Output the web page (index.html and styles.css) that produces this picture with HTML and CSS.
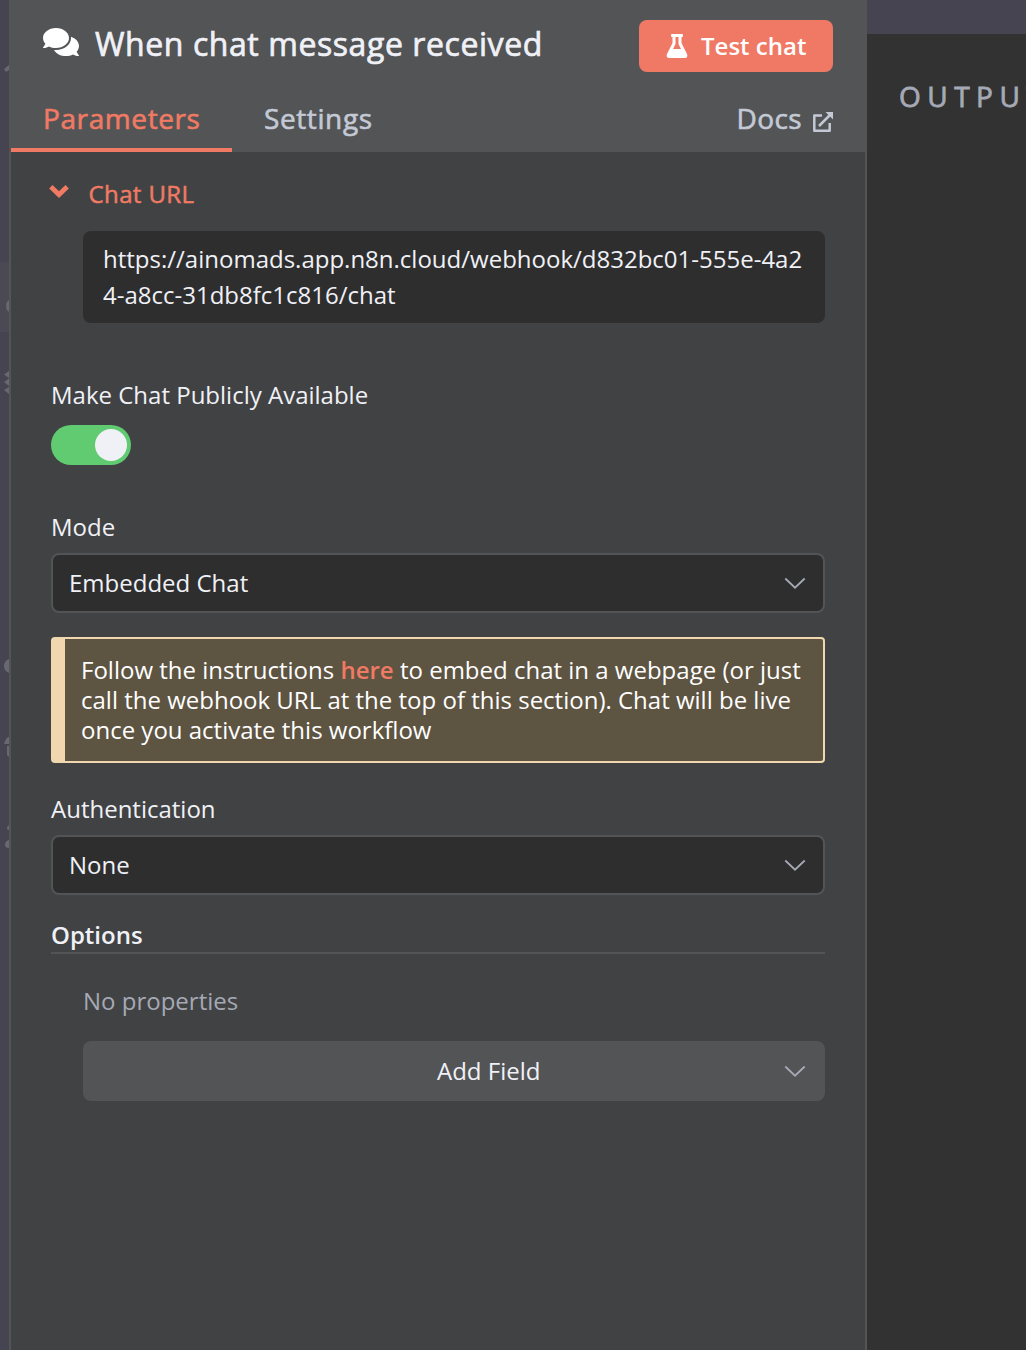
FILE: index.html
```html
<!DOCTYPE html>
<html lang="en">
<head>
<meta charset="utf-8">
<title>When chat message received</title>
<link rel="stylesheet" href="styles.css">
</head>
<body>
<div class="app">
  <nav class="rail">
    <svg width="9" height="1350" viewBox="0 0 9 1350">
      <rect y="262" width="9" height="70" fill="#4a4954"/>
      <g fill="#686873">
        <path d="M4 69L9 65V70L6 72Z"/>
        <path d="M9 300Q6 302 6 306T9 312Z"/>
        <path d="M9 371V378L4 374.500ZM9 378.500V386L4 382ZM9 387V394L4 390Z"/>
        <path d="M9 659Q4 661 4 666T9 673Z"/>
        <path d="M9 737Q6 737 4 744H9ZM7 746H9V757L7 755Z"/>
        <path d="M9 825Q7 826 7 828T9 830ZM9 840Q5 841 5 844.500T9 848Z"/>
      </g>
    </svg>
  </nav>
  <main class="panel">
    <header class="header">
      <div class="title-row">
        <svg class="comments" viewBox="0 32 576 448"><path fill="#fff" d="M416 192c0-88.400-93.100-160-208-160S0 103.600 0 192c0 34.300 14.100 65.900 38 92-13.400 30.200-35.500 54.200-35.800 54.500-2.200 2.300-2.800 5.700-1.500 8.700S4.800 352 8 352c36.600 0 66.900-12.300 88.700-25 32.200 15.700 70.300 25 111.300 25 114.900 0 208-71.600 208-160zm122 220c23.900-26 38-57.700 38-92 0-66.900-53.500-124.200-129.300-148.100.9 6.600 1.300 13.300 1.300 20.100 0 105.900-107.700 192-240 192-10.800 0-21.300-.8-31.700-1.900C207.800 439.600 281.800 480 368 480c41 0 79.100-9.200 111.300-25 21.800 12.700 52.100 25 88.700 25 3.200 0 6.100-1.900 7.300-4.800 1.300-2.900.7-6.300-1.500-8.700-.3-.3-22.400-24.200-35.800-54.500z"/></svg>
        <h1 class="title">When chat message received</h1>
        <button class="test-button">
          <svg class="flask" viewBox="0 0 22 24"><path fill="#fff" fill-rule="evenodd" d="M6 0H16Q17 0 17 1V2Q17 3 16 3H15.500V9L21 20Q22.300 24 19 24H3Q-.3 24 1 20L6.500 9V3H6Q5 3 5 2V1Q5 0 6 0ZM9.500 3V10L7 15H15L12.500 10V3Z"/></svg>
          <span>Test chat</span>
        </button>
      </div>
      <div class="tabs">
        <a class="tab active"><span>Parameters</span></a>
        <a class="tab"><span>Settings</span></a>
        <a class="tab docs"><span>Docs</span>
          <svg class="external" viewBox="0 0 20 20"><g fill="none" stroke="#c3c9d5" stroke-width="2.500"><path d="M9 3.600H1.300V18.700H16.700V11" stroke-linejoin="round"/><path d="M6 14L17 3"/></g><path fill="#c3c9d5" d="M12.500 0H20V7.500Z"/></svg>
        </a>
      </div>
    </header>
    <div class="content">
      <div class="url-heading">
        <svg class="caret" viewBox="0 0 20 14"><path d="M1.800 2.800L10 10.600L18.200 2.800" fill="none" stroke="#f07a64" stroke-width="4.800"/></svg>
        <span>Chat URL</span>
      </div>
      <div class="url-box">https://ainomads.app.n8n.cloud/webhook/d832bc01-555e-4a2<br>4-a8cc-31db8fc1c816/chat</div>
      <div class="label public-label"><span>Make Chat Publicly Available</span></div>
      <div class="switch"><span class="knob"></span></div>
      <div class="label mode-label"><span>Mode</span></div>
      <div class="select"><span>Embedded Chat</span><svg class="chevron" viewBox="0 0 22 12"><path d="M1.300 1.500L11 10.700L20.700 1.500"/></svg></div>
      <div class="notice">Follow the instructions <b>here</b> to embed chat in a webpage (or just<br>call the webhook URL at the top of this section). Chat will be live<br>once you activate this workflow</div>
      <div class="label auth-label"><span>Authentication</span></div>
      <div class="select"><span>None</span><svg class="chevron" viewBox="0 0 22 12"><path d="M1.300 1.500L11 10.700L20.700 1.500"/></svg></div>
      <h2 class="options">Options</h2>
      <div class="empty"><span>No properties</span></div>
      <div class="add-field"><span>Add Field</span><svg class="chevron" viewBox="0 0 22 12"><path d="M1.300 1.500L11 10.700L20.700 1.500"/></svg></div>
    </div>
  </main>
  <aside class="output"><div class="output-body"><span>OUTPUT</span></div></aside>
</div>
</body>
</html>
```
FILE: styles.css
```css
* { box-sizing: border-box; }
body {
  margin: 0;
  overflow: hidden;
  background: #323232;
  color: #f0f1f7;
  font: 24px/36px "Open Sans", sans-serif;
}
h1, h2 { margin: 0; }
svg { display: block; flex: none; }
.app { display: flex; width: 1026px; height: 1350px; overflow: hidden; white-space: nowrap; }
.rail { flex: 0 0 9px; background: #454450; }
.panel {
  flex: 0 0 858px;
  background: #414243;
  border: solid #535456;
  border-width: 0 2px;
}
.header { height: 152px; padding-top: 20px; background: #535456; }
.title-row { display: flex; height: 52px; padding: 0 32px; }
.comments { width: 36px; height: 28px; margin-top: 8px; }
/* Medium weight: regular glyphs with a thin stroke and slightly open tracking */
.title { margin-left: 16px; font-size: 32px; font-weight: 400; line-height: 48px; letter-spacing: .57px; -webkit-text-stroke: .7px; }
.test-button {
  display: flex;
  align-items: center;
  width: 194px;
  height: 52px;
  margin-left: auto;
  padding: 0 0 0 27px;
  border: 0;
  border-radius: 8px;
  background: #ef7965;
  color: #fff;
  font: 600 24px/36px "Open Sans", sans-serif;
}
.flask { width: 22px; height: 24px; margin-right: 13px; }
.tabs { display: flex; height: 80px; padding-right: 32px; }
.tab { height: 80px; padding: 25px 32px 0; color: #c3c9d5; font-size: 28px; line-height: 42px; letter-spacing: .6px; -webkit-text-stroke: .6px; }
.tab.active { width: 221px; border-bottom: 4px solid #f07a64; color: #f07a64; }
.tab.docs { display: flex; gap: 11px; margin-left: auto; padding-right: 0; letter-spacing: .4px; }
.external { width: 20px; height: 20px; margin-top: 15px; }
.content { padding: 24px 40px 0; }
.url-heading { display: flex; height: 36px; color: #f07a64; letter-spacing: .4px; -webkit-text-stroke: .5px; }
.caret { width: 20px; height: 14px; margin: 8px 19.5px 0 -2px; }
.url-box { height: 92px; margin: 19px 0 0 32px; padding: 10px 20px; border-radius: 8px; background: #2e2e2e; }
.label { height: 36px; }
.public-label { margin-top: 54px; }
.switch { display: flex; justify-content: flex-end; width: 80px; height: 40px; margin-top: 12px; padding: 4px; border-radius: 20px; background: #60cb71; }
.knob { width: 32px; height: 32px; border-radius: 50%; background: #f0f1f7; }
.mode-label { margin-top: 44px; }
.select {
  display: flex;
  align-items: center;
  justify-content: space-between;
  height: 60px;
  margin-top: 8px;
  padding: 0 17px 0 16px;
  border: 2px solid #535456;
  border-radius: 8px;
  background: #2e2e2e;
}
.chevron { width: 22px; height: 12px; fill: none; stroke: #a5a9b5; stroke-width: 1.8; }
.notice {
  height: 126px;
  margin-top: 24px;
  padding: 16px 0 0 16px;
  border: 2px solid #f1d7af;
  border-left-width: 14px;
  border-radius: 4px;
  background: #5e5442;
  color: #fff;
  line-height: 30px;
}
.notice b { color: #f07a64; font-weight: 600; }
.auth-label { margin-top: 28px; }
.options { height: 38px; margin-top: 21px; border-bottom: 2px solid #535456; font-size: 24px; font-weight: 600; line-height: 38px; }
.empty { margin: 29px 0 0 32px; color: #a5a9b5; }
.add-field {
  display: flex;
  align-items: center;
  height: 60px;
  margin: 22px 0 0 32px;
  padding-right: 19px;
  border-radius: 8px;
  background: #535456;
}
.add-field span { margin-left: 354px; margin-right: auto; }
.output { flex: 1; min-width: 0; padding-top: 34px; background: #454450; }
.output-body { height: 1316px; padding: 41px 0 0 32px; background: #323232; color: #a5a9b5; font-size: 28px; line-height: 42px; letter-spacing: 6.5px; -webkit-text-stroke: .8px; }
```
